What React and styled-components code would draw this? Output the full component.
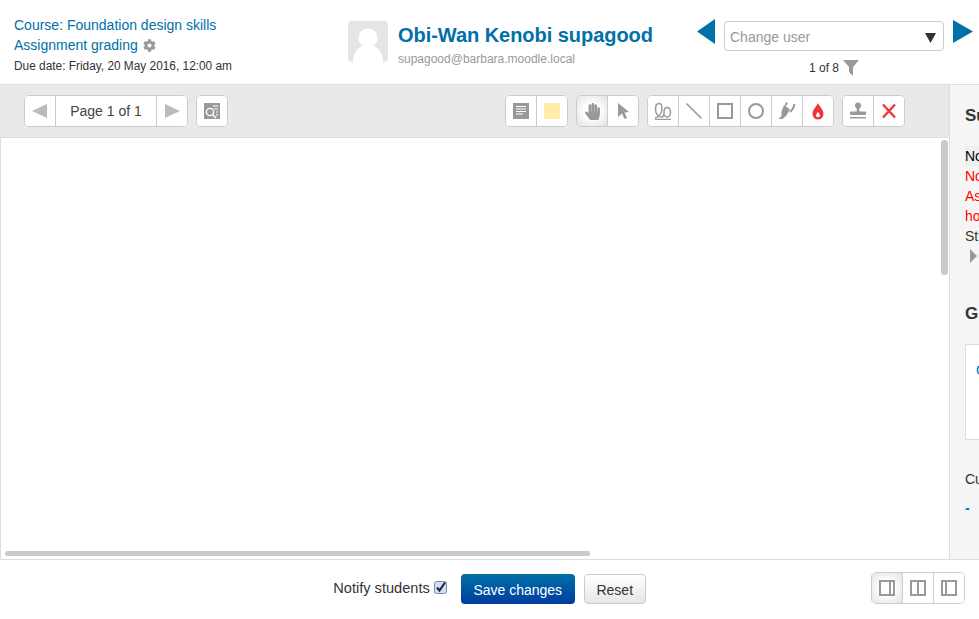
import React from 'react';
import styled, {createGlobalStyle} from 'styled-components';
import {FaCog, FaHandPaper} from 'react-icons/fa';

const GlobalStyle = createGlobalStyle`
    html, body {
        margin: 0;
        height: 100%;
        background: #fff;
        font-family: "Liberation Sans", Arial, sans-serif;
        color: #333;
    }
`;

const Page = styled.div`
    display: flex;
    flex-direction: column;
    height: 100vh;
    overflow: hidden;
`;

const Header = styled.header`
    display: flex;
    flex: 0 0 85px;
    box-sizing: border-box;
    border-bottom: 1px solid #ddd;
`;

const CourseInfo = styled.div`
    flex: 0 0 348px;
    box-sizing: border-box;
    padding: 15px 0 0 14px;
`;

const CourseLink = styled.div`
    font-size: 14px;
    line-height: 20px;
    color: #0070a8;
    display: flex;
    align-items: center;
    gap: 5px;
`;

const DueDate = styled.div`
    font-size: 11.86px;
    line-height: 20px;
    color: #333;
    margin-top: 1px;
`;

const UserInfo = styled.div`
    flex: 0 0 349px;
    display: flex;
    gap: 10px;
    padding-top: 21px;
`;

const Avatar = styled.svg`
    width: 40px;
    height: 41px;
    display: block;
`;

const UserName = styled.div`
    font-size: 20px;
    line-height: 28px;
    font-weight: bold;
    color: #0070a8;
    letter-spacing: -0.04px;
`;

const UserEmail = styled.div`
    font-size: 12px;
    line-height: 18px;
    color: #999;
    margin-top: 1px;
`;

const UserNav = styled.div`
    flex: 1;
    display: flex;
    flex-direction: column;
    padding-top: 19px;
`;

const NavRow = styled.div`
    display: flex;
    align-items: flex-start;
    gap: 9px;
`;

const Arrow = styled.svg`
    display: block;
    flex: none;
    margin-top: ${p => p.$top || 0}px;
`;

const ChangeUser = styled.div`
    flex: 0 0 220px;
    box-sizing: border-box;
    height: 30px;
    margin-top: 2px;
    padding: 2px 7px 0 5px;
    display: flex;
    align-items: center;
    justify-content: space-between;
    border: 1px solid #ccc;
    border-radius: 4px;
    font-size: 14px;
    color: #999;
`;

const Caret = styled.svg`
    display: block;
`;

const UserCount = styled.div`
    display: flex;
    align-items: center;
    gap: 4px;
    margin: 9px 0 0 112px;
    font-size: 12px;
    line-height: 16px;
    color: #333;
`;

const Workspace = styled.div`
    flex: 1;
    display: flex;
    min-height: 0;
    border-bottom: 1px solid #ddd;
`;

const GradePane = styled.div`
    flex: 0 0 949px;
    display: flex;
    flex-direction: column;
    min-width: 0;
`;

const Toolbar = styled.div`
    flex: 0 0 53px;
    box-sizing: border-box;
    display: flex;
    justify-content: space-between;
    padding: 10px 44px 0 24px;
    background: #e9e9e9;
    border-bottom: 1px solid #ddd;
`;

const ToolSet = styled.div`
    display: flex;
    gap: 8px;
`;

const Group = styled.div`
    display: flex;
    height: 32px;
    box-sizing: border-box;
    background: #fff;
    border: 1px solid #ccc;
    border-radius: 5px;
    overflow: hidden;
`;

const ToolButton = styled.div`
    width: ${p => p.$width || 30}px;
    flex: none;
    display: flex;
    align-items: center;
    justify-content: center;
    font-size: 14px;
    color: #444;
    background: ${p => p.$active ? 'radial-gradient(circle, #fff 35%, #e2e2e2 100%)' : '#fff'};

    & + & {
        border-left: 1px solid #ccc;
    }
`;

const ToolIcon = styled.svg`
    display: block;
    width: 20px;
    height: 20px;
`;

const PdfArea = styled.div`
    flex: 1;
    position: relative;
    background: #fff;
    border-left: 1px solid #ddd;
`;

const VerticalScroll = styled.div`
    position: absolute;
    top: 2px;
    right: 1px;
    width: 7px;
    height: 135px;
    border-radius: 4px;
    background: #c9c9c9;
`;

const HorizontalScroll = styled.div`
    position: absolute;
    left: 4px;
    bottom: 3px;
    width: 585px;
    height: 5px;
    border-radius: 3px;
    background: #c9c9c9;
`;

const Sidebar = styled.aside`
    flex: 1;
    min-width: 0;
    box-sizing: border-box;
    overflow: hidden;
    padding: 20px 0 0 15px;
    background: #f5f5f5;
    border-left: 1px solid #ddd;
    white-space: nowrap;
`;

const SideHeading = styled.div`
    font-size: 17px;
    line-height: 22px;
    font-weight: bold;
    color: #333;
    margin-top: ${p => p.$top || 0}px;
    margin-bottom: ${p => p.$gap}px;
`;

const StatusLine = styled.div`
    font-size: 14px;
    line-height: 20px;
    color: ${p => p.$color || '#333'};
    background: ${p => p.$shaded ? '#efefef' : 'transparent'};
`;

const Disclosure = styled.svg`
    display: block;
    margin: 3px 0 0 5px;
`;

const GradeBox = styled.div`
    width: 200px;
    height: 96px;
    box-sizing: border-box;
    padding: 15px 0 0 10px;
    background: #fff;
    border: 1px solid #ddd;
    font-size: 14px;
    line-height: 20px;
    color: #0070a8;
`;

const CurrentGrade = styled.div`
    font-size: 14px;
    line-height: 20px;
    color: #333;
    margin-top: 29px;
`;

const GradeLink = styled.div`
    font-size: 14px;
    line-height: 20px;
    font-weight: bold;
    color: #0070a8;
    margin-top: 9px;
`;

const Footer = styled.footer`
    flex: 0 0 59px;
    display: grid;
    grid-template-columns: 1fr auto 1fr;
    padding: 12px 14px 0 14px;
    box-sizing: border-box;
`;

const Actions = styled.div`
    grid-column: 2;
    display: flex;
    align-items: flex-start;
`;

const NotifyLabel = styled.label`
    display: flex;
    align-items: center;
    gap: 4px;
    height: 30px;
    margin: 1px 14px 0 0;
    font-size: 14.6px;
    color: #333;
`;

const NotifyBox = styled.svg`
    display: block;
    margin-top: -1px;
`;

const SaveButton = styled.div`
    width: 114px;
    height: 30px;
    box-sizing: border-box;
    padding-top: 2px;
    margin-top: 2px;
    display: flex;
    align-items: center;
    justify-content: center;
    border-radius: 4px;
    font-size: 14px;
    color: #fff;
    background: linear-gradient(#0070a8, #003c9e);
`;

const ResetButton = styled.div`
    width: 62px;
    height: 30px;
    box-sizing: border-box;
    padding-top: 2px;
    margin: 2px 0 0 9px;
    display: flex;
    align-items: center;
    justify-content: center;
    border: 1px solid #ccc;
    border-radius: 4px;
    font-size: 14px;
    color: #333;
    background: linear-gradient(#fff, #e6e6e6);
`;

const LayoutSwitch = styled(Group)`
    grid-column: 3;
    justify-self: end;
`;

const GRAY = '#999';
const RED = '#f0333c';

const Tool = ({children}) => (
    <ToolIcon viewBox="0 0 20 20">{children}</ToolIcon>
);

const PrevIcon = () => (
    <Tool><polygon points="17,3 17,17 2,10" fill="#bbb" /></Tool>
);

const NextIcon = () => (
    <Tool><polygon points="3,3 3,17 18,10" fill="#bbb" /></Tool>
);

const SearchCommentsIcon = () => (
    <Tool>
        <rect x="2" y="2" width="16" height="16" fill={GRAY} />
        <path d="M11 5h5M12 8h4M14 11h2M14 14h2" stroke="#fff" strokeWidth="1" />
        <circle cx="8" cy="11" r="3.6" fill="none" stroke="#fff" strokeWidth="1.4" />
        <path d="M10.5 13.5L14 17" stroke="#fff" strokeWidth="1.6" />
    </Tool>
);

const CommentIcon = () => (
    <Tool>
        <rect x="2" y="2" width="16" height="16" fill={GRAY} />
        <path d="M5 5.5h10M5 8h10M5 10.5h10M5 13h7" stroke="#fff" strokeWidth="1" />
    </Tool>
);

const NoteIcon = () => (
    <Tool><rect x="2" y="2" width="16" height="16" fill="#ffeeaa" /></Tool>
);

const PointerIcon = () => (
    <Tool>
        <polygon points="5,2 16,11 11.5,11.5 14,17 11.5,18 9,12.5 5,16" fill={GRAY} />
    </Tool>
);

const PenIcon = () => (
    <Tool>
        <path
            d="M2 17C5 16.500 9 13 9 7.500 9 4.500 8 2.500 6 2.500S2.500 4.500 2.500 8C2.500 13 5.500 16 8.500 16 10.500 16 11 14 11 11.500 11 8.500 12 6.500 14 6.500S17.500 8.500 17.500 11.500C17.500 14 16 16 14 16 12.500 16 11 14.500 11 13"
            fill="none"
            stroke={GRAY}
            strokeWidth="1.500"
        />
        <path d="M2 18.300h16" stroke={GRAY} strokeWidth="1.200" />
    </Tool>
);

const LineIcon = () => (
    <Tool><path d="M2.500 2.500L17.500 17.500" stroke={GRAY} strokeWidth="1.600" /></Tool>
);

const RectangleIcon = () => (
    <Tool><rect x="3" y="3" width="14" height="14" fill="none" stroke={GRAY} strokeWidth="2" /></Tool>
);

const OvalIcon = () => (
    <Tool><circle cx="10" cy="10" r="7" fill="none" stroke={GRAY} strokeWidth="2" /></Tool>
);

const HighlightIcon = () => (
    <Tool>
        <polygon points="7,4 13,8.500 9,15 4.500,15 4.500,10.500" fill={GRAY} />
        <polygon points="4.500,15 9,15 5.500,18 1.500,18" fill={GRAY} />
        <path d="M10 1.500L8.500 4.500M17.500 3C17 6 15.500 9 13 11" stroke={GRAY} strokeWidth="1.800" fill="none" />
    </Tool>
);

const DropIcon = () => (
    <Tool>
        <path d="M10 2c1 3 5.500 6.500 5.500 11a5.500 5.500 0 0 1-11 0C4.500 8.500 9 5 10 2z" fill={RED} />
        <path d="M10 11c.6 1.100 2 2 2 3.300a2 2 0 0 1-4 0c0-1.300 1.400-2.200 2-3.300z" fill="#fff" />
    </Tool>
);

const StampIcon = () => (
    <Tool>
        <circle cx="10" cy="4.500" r="3" fill={GRAY} />
        <rect x="8.700" y="6" width="2.600" height="5" fill={GRAY} />
        <rect x="2" y="10.500" width="16" height="3.500" rx="1" fill={GRAY} />
        <rect x="2" y="16" width="16" height="1.500" fill={GRAY} />
    </Tool>
);

const EraseIcon = () => (
    <Tool><path d="M4 3.500L16 16.500M16 3.500L4 16.500" stroke={RED} strokeWidth="2.300" /></Tool>
);

const PaneIcon = ({split}) => (
    <Tool>
        <rect x="3" y="3" width="14" height="14" fill="none" stroke={GRAY} strokeWidth="2" />
        <path d={`M${split} 3v14`} stroke={GRAY} strokeWidth="2" />
    </Tool>
);

const App = () => (
    <Page>
        <GlobalStyle />
        <Header>
            <CourseInfo>
                <CourseLink>Course: Foundation design skills</CourseLink>
                <CourseLink>
                    Assignment grading
                    <FaCog size={13} color="#999" />
                </CourseLink>
                <DueDate>Due date: Friday, 20 May 2016, 12:00 am</DueDate>
            </CourseInfo>
            <UserInfo>
                <Avatar viewBox="0 0 40 41">
                    <rect width="40" height="41" rx="4" fill="#e5e5e5" />
                    <circle cx="20" cy="17" r="9.500" fill="#fff" />
                    <path d="M5 41c0-10 6-17 15-17s15 7 15 17z" fill="#fff" />
                </Avatar>
                <div>
                    <UserName>Obi-Wan Kenobi supagood</UserName>
                    <UserEmail>supagood@barbara.moodle.local</UserEmail>
                </div>
            </UserInfo>
            <UserNav>
                <NavRow>
                    <Arrow width="18" height="25" viewBox="0 0 18 25">
                        <polygon points="18,0 18,25 0,12.500" fill="#0070a8" />
                    </Arrow>
                    <ChangeUser>
                        Change user
                        <Caret width="11" height="11" viewBox="0 0 11 11">
                            <polygon points="0,1 11,1 5.500,11" fill="#333" />
                        </Caret>
                    </ChangeUser>
                    <Arrow width="20" height="23" viewBox="0 0 20 23" $top={1}>
                        <polygon points="0,0 0,23 20,11.500" fill="#0070a8" />
                    </Arrow>
                </NavRow>
                <UserCount>
                    1 of 8
                    <svg width="16" height="16" viewBox="0 0 16 16">
                        <polygon points="0,0 16,0 10,7 10,16 6,12 6,7" fill={GRAY} />
                    </svg>
                </UserCount>
            </UserNav>
        </Header>
        <Workspace>
            <GradePane>
                <Toolbar>
                    <ToolSet>
                        <Group>
                            <ToolButton><PrevIcon /></ToolButton>
                            <ToolButton $width={100}>Page 1 of 1</ToolButton>
                            <ToolButton><NextIcon /></ToolButton>
                        </Group>
                        <Group>
                            <ToolButton><SearchCommentsIcon /></ToolButton>
                        </Group>
                    </ToolSet>
                    <ToolSet>
                        <Group>
                            <ToolButton><CommentIcon /></ToolButton>
                            <ToolButton><NoteIcon /></ToolButton>
                        </Group>
                        <Group>
                            <ToolButton $active><FaHandPaper size={17} color={GRAY} /></ToolButton>
                            <ToolButton><PointerIcon /></ToolButton>
                        </Group>
                        <Group>
                            <ToolButton><PenIcon /></ToolButton>
                            <ToolButton><LineIcon /></ToolButton>
                            <ToolButton><RectangleIcon /></ToolButton>
                            <ToolButton><OvalIcon /></ToolButton>
                            <ToolButton><HighlightIcon /></ToolButton>
                            <ToolButton><DropIcon /></ToolButton>
                        </Group>
                        <Group>
                            <ToolButton><StampIcon /></ToolButton>
                            <ToolButton><EraseIcon /></ToolButton>
                        </Group>
                    </ToolSet>
                </Toolbar>
                <PdfArea>
                    <VerticalScroll />
                    <HorizontalScroll />
                </PdfArea>
            </GradePane>
            <Sidebar>
                <SideHeading $gap={19}>Submission status</SideHeading>
                <StatusLine $color="#000" $shaded>No attempt</StatusLine>
                <StatusLine $color="#f00">Not graded</StatusLine>
                <StatusLine $color="#f00">Assignment is overdue by:</StatusLine>
                <StatusLine $color="#f00">hours</StatusLine>
                <StatusLine>Student can edit</StatusLine>
                <Disclosure width="7" height="14" viewBox="0 0 7 14">
                    <polygon points="0,0 7,7 0,14" fill={GRAY} />
                </Disclosure>
                <SideHeading $top={40} $gap={19}>Grade</SideHeading>
                <GradeBox>Grade out of 100</GradeBox>
                <CurrentGrade>Current grade in gradebook</CurrentGrade>
                <GradeLink>-</GradeLink>
            </Sidebar>
        </Workspace>
        <Footer>
            <Actions>
                <NotifyLabel>
                    Notify students
                    <NotifyBox width="13" height="13" viewBox="0 0 13 13">
                        <rect x="0.500" y="0.500" width="12" height="12" rx="2" fill="#cfe0f5" stroke="#7a8ea8" />
                        <path d="M3 6.500l2.500 3L11 1.500" fill="none" stroke="#223" strokeWidth="2" />
                    </NotifyBox>
                </NotifyLabel>
                <SaveButton>Save changes</SaveButton>
                <ResetButton>Reset</ResetButton>
            </Actions>
            <LayoutSwitch>
                <ToolButton $active><PaneIcon split={13} /></ToolButton>
                <ToolButton><PaneIcon split={10} /></ToolButton>
                <ToolButton><PaneIcon split={7} /></ToolButton>
            </LayoutSwitch>
        </Footer>
    </Page>
);

export default App;
